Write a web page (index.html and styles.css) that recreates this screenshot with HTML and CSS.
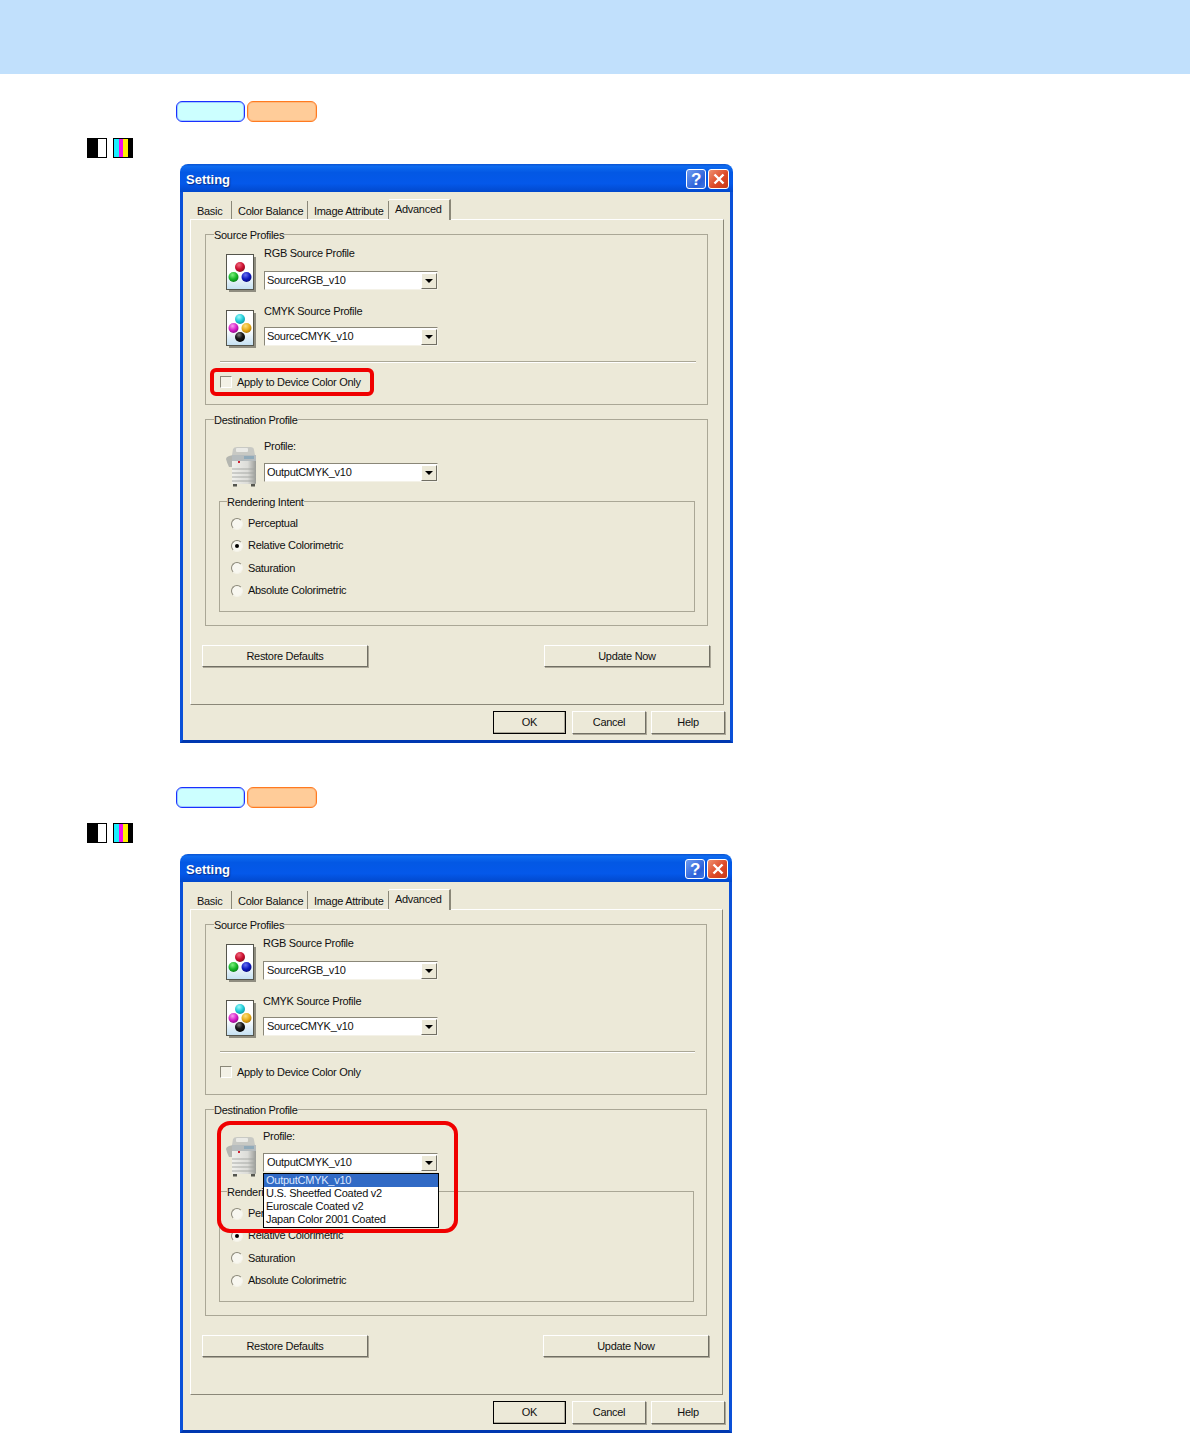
FILE: index.html
```html
<!DOCTYPE html>
<html lang="en">
<head>
  <meta charset="UTF-8">
  <title>Setting - Advanced</title>
  <link rel="stylesheet" href="styles.css">
</head>
<body>
  <svg class="defs" aria-hidden="true">
    <defs>
      <linearGradient id="paper" x1="0" y1="0" x2="0" y2="1">
        <stop offset="0.55" stop-color="#ffffff"/><stop offset="1" stop-color="#c4e0f2"/>
      </linearGradient>
      <radialGradient id="ballRed" cx="0.4" cy="0.3" r="0.7"><stop offset="0" stop-color="#f06a80"/><stop offset="0.6" stop-color="#cc1030"/><stop offset="1" stop-color="#8c0c20"/></radialGradient>
      <radialGradient id="ballGreen" cx="0.4" cy="0.3" r="0.7"><stop offset="0" stop-color="#80f080"/><stop offset="0.6" stop-color="#18b828"/><stop offset="1" stop-color="#0c8018"/></radialGradient>
      <radialGradient id="ballBlue" cx="0.4" cy="0.3" r="0.7"><stop offset="0" stop-color="#6a70f0"/><stop offset="0.6" stop-color="#1018c0"/><stop offset="1" stop-color="#080c80"/></radialGradient>
      <radialGradient id="ballCyan" cx="0.4" cy="0.3" r="0.7"><stop offset="0" stop-color="#a0fafa"/><stop offset="0.6" stop-color="#20ccd8"/><stop offset="1" stop-color="#109aa8"/></radialGradient>
      <radialGradient id="ballMagenta" cx="0.4" cy="0.3" r="0.7"><stop offset="0" stop-color="#f8a0f0"/><stop offset="0.6" stop-color="#d820c8"/><stop offset="1" stop-color="#980c90"/></radialGradient>
      <radialGradient id="ballYellow" cx="0.4" cy="0.3" r="0.7"><stop offset="0" stop-color="#fce080"/><stop offset="0.6" stop-color="#e8ac18"/><stop offset="1" stop-color="#b07c08"/></radialGradient>
      <radialGradient id="ballBlack" cx="0.4" cy="0.3" r="0.7"><stop offset="0" stop-color="#808080"/><stop offset="0.5" stop-color="#1c1c1c"/><stop offset="1" stop-color="#000000"/></radialGradient>
      <linearGradient id="body" x1="0" y1="0" x2="1" y2="0">
        <stop offset="0" stop-color="#f0f0ec"/><stop offset="0.65" stop-color="#dcdcd8"/><stop offset="1" stop-color="#9a9c98"/>
      </linearGradient>

      <symbol id="icon-rgb" viewBox="0 0 30 38">
        <rect x="3" y="3" width="27" height="35" fill="#8f8d80"/>
        <rect x="0.5" y="0.5" width="27" height="35" fill="url(#paper)" stroke="#55554c"/>
        <circle cx="14" cy="13" r="5" fill="url(#ballRed)"/>
        <circle cx="7.5" cy="23" r="5" fill="url(#ballGreen)"/>
        <circle cx="20.5" cy="23" r="5" fill="url(#ballBlue)"/>
      </symbol>
      <symbol id="icon-cmyk" viewBox="0 0 30 38">
        <rect x="3" y="3" width="27" height="35" fill="#8f8d80"/>
        <rect x="0.5" y="0.5" width="27" height="35" fill="url(#paper)" stroke="#55554c"/>
        <circle cx="14" cy="9" r="5" fill="url(#ballCyan)"/>
        <circle cx="7.5" cy="18" r="5" fill="url(#ballMagenta)"/>
        <circle cx="20.5" cy="18" r="5" fill="url(#ballYellow)"/>
        <circle cx="14" cy="27" r="5" fill="url(#ballBlack)"/>
      </symbol>
      <symbol id="icon-copier" viewBox="0 0 31 41">
        <path d="M0 13 Q0 11 3 10 L7 9 L7 21 L3 21 Q1 17 0 13 Z" fill="#b4b6b0"/>
        <path d="M7 3 Q8 1 11 1 L24 1 Q28 1 28 4 L29 9 L6 9 Z" fill="#c8c9c4"/>
        <rect x="10" y="2" width="12" height="4" rx="1" fill="#eaeae6"/>
        <rect x="6" y="9" width="24" height="29" rx="1" fill="url(#body)"/>
        <rect x="6" y="9" width="24" height="6" fill="#b6bcbe"/>
        <rect x="18" y="10" width="10" height="3" fill="#90aaba"/>
        <rect x="12" y="15" width="2" height="2" fill="#d02030"/>
        <path d="M6 23 H30 M6 27 H30 M6 31 H30 M6 35 H30" stroke="#a2a4a0" stroke-width="0.9"/>
        <rect x="7" y="38" width="4" height="2.5" fill="#55564f"/>
        <rect x="25" y="38" width="4" height="2.5" fill="#55564f"/>
      </symbol>
      <symbol id="icon-close" viewBox="0 0 12 12">
        <path d="M1.5 1.5 L10.5 10.5 M10.5 1.5 L1.5 10.5" stroke="#ffffff" stroke-width="2.4" fill="none"/>
      </symbol>
    </defs>
  </svg>

  <header class="top-bar"></header>

  <section class="step">
    <div class="pills">
      <span class="pill pill-blue"></span>
      <span class="pill pill-orange"></span>
    </div>
    <div class="marks">
      <div class="mark mark-mono"><i></i></div>
      <div class="mark mark-color"><i class="c"></i><i class="m"></i><i class="y"></i><i class="k"></i></div>
    </div>

    <div class="dialog">
      <div class="title-bar">
        <span class="title">Setting</span>
        <span class="win-btn win-help">?</span>
        <span class="win-btn win-close"><svg width="12" height="12"><use href="#icon-close"/></svg></span>
      </div>
      <div class="dialog-body">
        <div class="tabs">
          <span class="tab tab-basic">Basic</span>
          <span class="tab tab-balance">Color Balance</span>
          <span class="tab tab-attr">Image Attribute</span>
          <span class="tab tab-adv">Advanced</span>
        </div>
        <div class="panel">
          <fieldset class="group">
            <legend>Source Profiles</legend>
            <div class="row row-rgb">
              <svg class="doc-icon"><use href="#icon-rgb"/></svg>
              <div class="field">
                <label>RGB Source Profile</label>
                <div class="combo"><span>SourceRGB_v10</span><b class="combo-btn"></b></div>
              </div>
            </div>
            <div class="row row-cmyk">
              <svg class="doc-icon"><use href="#icon-cmyk"/></svg>
              <div class="field">
                <label>CMYK Source Profile</label>
                <div class="combo"><span>SourceCMYK_v10</span><b class="combo-btn"></b></div>
              </div>
            </div>
            <div class="separator"></div>
            <div class="apply-row">
              <span class="checkbox"></span>
              <span>Apply to Device Color Only</span>
              <div class="callout callout-apply"></div>
            </div>
          </fieldset>

          <fieldset class="group group-dest">
            <legend>Destination Profile</legend>
            <div class="row row-dest">
              <svg class="copier-icon"><use href="#icon-copier"/></svg>
              <div class="field">
                <label>Profile:</label>
                <div class="combo"><span>OutputCMYK_v10</span><b class="combo-btn"></b></div>
              </div>
            </div>
            <fieldset class="group group-intent">
              <legend>Rendering Intent</legend>
              <div class="radio-row"><span class="radio"></span><span>Perceptual</span></div>
              <div class="radio-row"><span class="radio checked"></span><span>Relative Colorimetric</span></div>
              <div class="radio-row"><span class="radio"></span><span>Saturation</span></div>
              <div class="radio-row"><span class="radio"></span><span>Absolute Colorimetric</span></div>
            </fieldset>
          </fieldset>

          <div class="panel-buttons">
            <button class="btn btn-wide">Restore Defaults</button>
            <button class="btn btn-wide">Update Now</button>
          </div>
        </div>
        <div class="footer">
          <button class="btn btn-foot btn-default">OK</button>
          <button class="btn btn-foot">Cancel</button>
          <button class="btn btn-foot">Help</button>
        </div>
      </div>
    </div>
  </section>

  <section class="step step-second">
    <div class="pills">
      <span class="pill pill-blue"></span>
      <span class="pill pill-orange"></span>
    </div>
    <div class="marks">
      <div class="mark mark-mono"><i></i></div>
      <div class="mark mark-color"><i class="c"></i><i class="m"></i><i class="y"></i><i class="k"></i></div>
    </div>

    <div class="dialog dialog-narrow">
      <div class="title-bar">
        <span class="title">Setting</span>
        <span class="win-btn win-help">?</span>
        <span class="win-btn win-close"><svg width="12" height="12"><use href="#icon-close"/></svg></span>
      </div>
      <div class="dialog-body">
        <div class="tabs">
          <span class="tab tab-basic">Basic</span>
          <span class="tab tab-balance">Color Balance</span>
          <span class="tab tab-attr">Image Attribute</span>
          <span class="tab tab-adv">Advanced</span>
        </div>
        <div class="panel">
          <fieldset class="group">
            <legend>Source Profiles</legend>
            <div class="row row-rgb">
              <svg class="doc-icon"><use href="#icon-rgb"/></svg>
              <div class="field">
                <label>RGB Source Profile</label>
                <div class="combo"><span>SourceRGB_v10</span><b class="combo-btn"></b></div>
              </div>
            </div>
            <div class="row row-cmyk">
              <svg class="doc-icon"><use href="#icon-cmyk"/></svg>
              <div class="field">
                <label>CMYK Source Profile</label>
                <div class="combo"><span>SourceCMYK_v10</span><b class="combo-btn"></b></div>
              </div>
            </div>
            <div class="separator"></div>
            <div class="apply-row">
              <span class="checkbox"></span>
              <span>Apply to Device Color Only</span>
            </div>
          </fieldset>

          <fieldset class="group group-dest">
            <legend>Destination Profile</legend>
            <div class="row row-dest">
              <svg class="copier-icon"><use href="#icon-copier"/></svg>
              <div class="field">
                <label>Profile:</label>
                <div class="combo combo-open">
                  <span>OutputCMYK_v10</span><b class="combo-btn"></b>
                  <ul class="combo-list">
                    <li class="selected">OutputCMYK_v10</li>
                    <li>U.S. Sheetfed Coated v2</li>
                    <li>Euroscale Coated v2</li>
                    <li>Japan Color 2001 Coated</li>
                  </ul>
                </div>
              </div>
              <div class="callout callout-dest"></div>
            </div>
            <fieldset class="group group-intent">
              <legend>Rendering Intent</legend>
              <div class="radio-row"><span class="radio"></span><span>Perceptual</span></div>
              <div class="radio-row"><span class="radio checked"></span><span>Relative Colorimetric</span></div>
              <div class="radio-row"><span class="radio"></span><span>Saturation</span></div>
              <div class="radio-row"><span class="radio"></span><span>Absolute Colorimetric</span></div>
            </fieldset>
          </fieldset>

          <div class="panel-buttons">
            <button class="btn btn-wide">Restore Defaults</button>
            <button class="btn btn-wide">Update Now</button>
          </div>
        </div>
        <div class="footer">
          <button class="btn btn-foot btn-default">OK</button>
          <button class="btn btn-foot">Cancel</button>
          <button class="btn btn-foot">Help</button>
        </div>
      </div>
    </div>
  </section>
</body>
</html>
```

FILE: styles.css
```css
* {
  box-sizing: border-box;
}

body {
  margin: 0;
  background: #fff;
  color: #111;
  font-family: "Liberation Sans", Arial, sans-serif;
  font-size: 11px;
  line-height: 13px;
  letter-spacing: -0.3px;
}

.defs {
  position: absolute;
  width: 0;
  height: 0;
}

.top-bar {
  height: 74px;
  background: #c1e0fc;
}

/* page blocks */
.step {
  padding-top: 27px;
}

.step-second {
  padding-top: 44px;
}

.pills {
  display: flex;
  gap: 2px;
  padding-left: 176px;
}

.pill {
  width: 69px;
  height: 21px;
  border-radius: 6px;
  border: 1px solid;
}

.pill-orange {
  width: 70px;
  background: #ffcc99;
  border-color: #ff7a20;
  box-shadow: inset 0 0 0 1px rgba(255, 122, 32, 0.25);
}

.pill-blue {
  background: #ccffff;
  border-color: #1a30ff;
  box-shadow: inset 0 0 0 1px rgba(26, 48, 255, 0.25);
}

.marks {
  display: flex;
  gap: 6px;
  margin-top: 16px;
  padding-left: 87px;
}

.step-second .marks {
  margin-top: 15px;
}

.mark {
  display: flex;
  width: 20px;
  height: 20px;
  border: 1px solid #000;
  background: #fff;
}

.mark-mono i {
  width: 10px;
  background: #000;
}

.mark-color i {
  flex: 1;
}

.mark-color .c { background: #19f0ff; }
.mark-color .m { background: #f010e8; }
.mark-color .y { background: #fff200; }
.mark-color .k { background: #000; }

/* dialog window */
.dialog {
  width: 553px;
  height: 579px;
  margin: 6px 0 0 180px;
  display: flex;
  flex-direction: column;
}

.step-second .dialog {
  margin-top: 11px;
}

.dialog-narrow {
  width: 552px;
}

.title-bar {
  height: 28px;
  flex: none;
  display: flex;
  align-items: center;
  gap: 2px;
  padding: 2px 4px 0 6px;
  border-radius: 8px 8px 0 0;
  background: linear-gradient(#0a52d0 0, #0f6cf0 8%, #0358e4 30%, #0458ea 70%, #0148cc 100%);
}

.title {
  flex: 1;
  color: #fff;
  font-size: 13px;
  font-weight: bold;
  letter-spacing: 0;
  text-shadow: 1px 1px 1px #0a2f8a;
}

.win-btn {
  width: 20px;
  height: 20px;
  border: 1px solid #fff;
  border-radius: 3px;
  display: flex;
  align-items: center;
  justify-content: center;
  color: #fff;
}

.win-help {
  font-size: 17px;
  font-weight: bold;
  background: linear-gradient(135deg, #6f9cf0, #2a5fd8 70%, #3f78e6);
}

.win-close {
  width: 21px;
  background: linear-gradient(135deg, #ee9070, #dd4a28 55%, #c83a18);
}

.dialog-body {
  flex: 1;
  display: flex;
  flex-direction: column;
  padding: 7px 6px 0 7px;
  background: #ece9d8;
  border: solid #0a50d8;
  border-width: 0 3px 3px;
  border-bottom-color: #0038b0;
}

/* tabs */
.tabs {
  display: flex;
  align-items: flex-end;
  height: 20px;
  padding-left: 1px;
}

.tab {
  height: 18px;
  padding: 4px 0 0 6px;
  border-right: 1px solid #8a8778;
  white-space: nowrap;
}

.tab-basic { width: 41px; }
.tab-balance { width: 76px; }
.tab-attr { width: 81px; }

.tab-adv {
  width: 62px;
  height: 21px;
  margin-bottom: -1px;
  padding-top: 3px;
  position: relative;
  background: #ece9d8;
  border-top: 1px solid #fff;
  border-right: 2px solid #8a8778;
}

.panel {
  height: 486px;
  padding: 8px 15px 0 14px;
  border: 1px solid #fff;
  border-color: #fff #8a8778 #8a8778 #fff;
}

/* group boxes */
.group {
  margin: 0;
  padding: 0 0 15px;
  border: 1px solid #aaa796;
  min-width: 0;
}

.group legend {
  height: 13px;
  margin-left: 8px;
  padding: 1px 0 0;
  line-height: 12px;
}

.group-dest {
  margin-top: 8px;
  padding-bottom: 13px;
}

.group-intent {
  margin: 8px 12px 0 13px;
  padding: 4.4px 0 9.6px 11px;
}

.group-intent legend {
  margin-left: -4px;
}

.dialog-narrow .row {
  gap: 7px;
}

.dialog-narrow .combo {
  width: 175px;
  padding-left: 3px;
}

.row {
  display: flex;
  gap: 8px;
  padding-left: 20px;
  position: relative;
}

.row-rgb {
  padding-top: 6px;
}

.row-rgb .doc-icon {
  margin-top: 7px;
}

.row-rgb label {
  margin-bottom: 11px;
}

.row-cmyk {
  padding-top: 13px;
}

.row-cmyk .doc-icon {
  margin-top: 5px;
}

.row-cmyk label {
  margin-bottom: 9px;
}

.row-dest {
  padding-top: 14px;
}

.row-dest label {
  margin-bottom: 10px;
}

.doc-icon {
  width: 30px;
  height: 38px;
  flex: none;
}

.copier-icon {
  width: 31px;
  height: 41px;
  margin: 6px -1px 0 0;
  flex: none;
  filter: blur(0.4px);
}

.field label {
  display: block;
}

/* combo box */
.combo {
  position: relative;
  width: 174px;
  height: 19px;
  display: flex;
  align-items: center;
  justify-content: space-between;
  padding: 0 0 0 2px;
  background: #fff;
  border: 1px solid;
  border-color: #8a8778 #f4f2e8 #f4f2e8 #8a8778;
}

.combo-btn {
  position: relative;
  width: 16px;
  height: 16px;
  background: #ece9d8;
  border: 1px solid;
  border-color: #fff #716f64 #716f64 #fff;
}

.combo-btn::after {
  content: "";
  position: absolute;
  left: 3px;
  top: 5px;
  border: 4px solid transparent;
  border-top: 4px solid #000;
  border-bottom: 0;
}

.combo-list {
  position: absolute;
  left: -1px;
  top: 19px;
  z-index: 2;
  width: 176px;
  margin: 0;
  padding: 0 0 1px;
  list-style: none;
  background: #fff;
  border: 1px solid #000;
}

.combo-list li {
  height: 13px;
  padding-left: 2px;
  letter-spacing: -0.25px;
  line-height: 13px;
}

.combo-list .selected {
  background: #316ac5;
  color: #dce8ff;
}

.separator {
  height: 2px;
  margin: 13px 11px 0 14px;
  background: #aaa796;
  border-bottom: 1px solid #fff;
}

.apply-row {
  position: relative;
  display: flex;
  align-items: center;
  gap: 5px;
  height: 14px;
  margin-top: 12px;
  padding-left: 14px;
}

.checkbox {
  width: 12px;
  height: 12px;
  background: #f3f1e6;
  border: 1px solid;
  border-color: #8a8778 #fff #fff #8a8778;
}

.radio-row {
  display: flex;
  align-items: center;
  gap: 5px;
  height: 22.33px;
}

.radio {
  position: relative;
  width: 12px;
  height: 12px;
  border-radius: 50%;
  background: #f8f7f0;
  border: 1px solid;
  border-color: #8a8778 #f4f2e8 #f4f2e8 #8a8778;
}

.radio.checked::after {
  content: "";
  position: absolute;
  left: 3px;
  top: 3px;
  width: 4px;
  height: 4px;
  border-radius: 50%;
  background: #000;
}

/* red highlights drawn over the dialog */
.callout {
  position: absolute;
  z-index: 3;
  border: 4px solid #f00000;
  pointer-events: none;
}

.callout-apply {
  left: 4px;
  top: -7px;
  width: 164px;
  height: 28px;
  border-radius: 6px;
}

.callout-dest {
  left: 11px;
  top: 5px;
  width: 241px;
  height: 112px;
  border-radius: 13px;
}

/* buttons */
.btn {
  margin: 0;
  padding: 0;
  background: #ece9d8;
  color: inherit;
  font: inherit;
  letter-spacing: inherit;
  border: 1px solid;
  border-color: #fff #716f64 #716f64 #fff;
  box-shadow: 1px 1px 0 #aca899;
}

.panel-buttons {
  display: flex;
  justify-content: space-between;
  margin: 19px -2px 0 -3px;
}

.btn-wide {
  width: 166px;
  height: 22px;
}

.footer {
  display: flex;
  justify-content: flex-end;
  gap: 5px;
  padding-top: 6px;
  margin-right: -1px;
}

.dialog-narrow .footer {
  margin-right: -2px;
}

.btn-foot {
  width: 74px;
  height: 23px;
}

.btn-default {
  width: 73px;
  margin-right: 1px;
  border: 1px solid #000;
  box-shadow: inset -1px -1px 0 #aca899;
}
```
